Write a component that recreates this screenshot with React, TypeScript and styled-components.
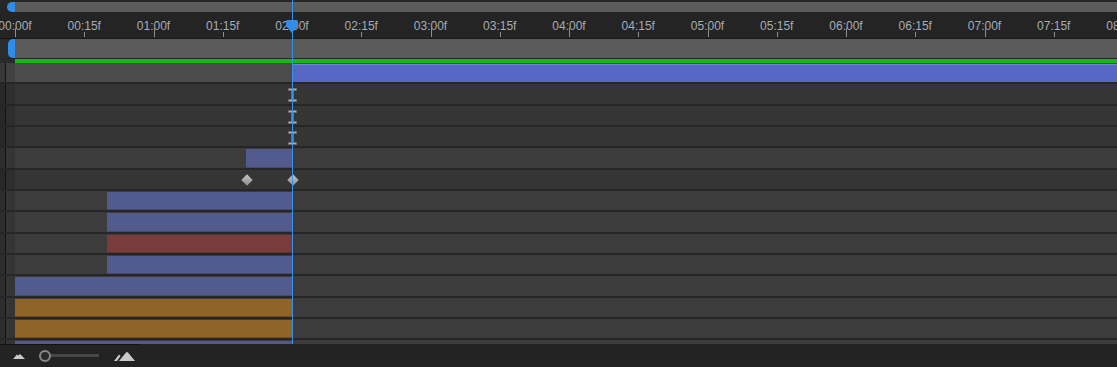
import * as React from 'react';
import styled, { createGlobalStyle, css } from 'styled-components';

const GUTTER = 15;
const FRAME_PX = 69.25 / 15;
const FPS = 30;
const PLAYHEAD = 60;
const ROW_H = 64 / 3;

const frameX = (frame: number) => frame * FRAME_PX;

type BarTone = 'blue' | 'red' | 'orange' | 'work';
type RowTone = 'work' | 'layer' | 'prop';

interface RowData {
  tone: RowTone;
  bar?: { start: number; end?: number; tone: BarTone };
  ibeam?: number;
  keys?: number[];
}

const rows: RowData[] = [
  { tone: 'work', bar: { start: 60, tone: 'work' } },
  { tone: 'prop', ibeam: 60 },
  { tone: 'prop', ibeam: 60 },
  { tone: 'prop', ibeam: 60 },
  { tone: 'layer', bar: { start: 50, end: 60, tone: 'blue' } },
  { tone: 'prop', keys: [50, 60] },
  { tone: 'layer', bar: { start: 20, end: 60, tone: 'blue' } },
  { tone: 'layer', bar: { start: 20, end: 60, tone: 'blue' } },
  { tone: 'layer', bar: { start: 20, end: 60, tone: 'red' } },
  { tone: 'layer', bar: { start: 20, end: 60, tone: 'blue' } },
  { tone: 'layer', bar: { start: 0, end: 60, tone: 'blue' } },
  { tone: 'layer', bar: { start: 0, end: 60, tone: 'orange' } },
  { tone: 'layer', bar: { start: 0, end: 60, tone: 'orange' } },
  { tone: 'layer', bar: { start: 0, end: 60, tone: 'blue' } },
];

const pad = (n: number) => String(n).padStart(2, '0');
const timecode = (frame: number) =>
  `${pad(Math.floor(frame / FPS))}:${pad(frame % FPS)}f`;

const ticks = Array.from({ length: 17 }, (_, i) => i * 15);

const GlobalStyle = createGlobalStyle`
  html, body {
    margin: 0;
    padding: 0;
    background: #232323;
    overflow: hidden;
  }
  body {
    font-family: "Liberation Sans", Arial, sans-serif;
  }
`;

const Panel = styled.div`
  position: relative;
  display: flex;
  flex-direction: column;
  height: 100vh;
  background: #2a2a2a;
  overflow: hidden;
`;

const ScrollStrip = styled.div`
  display: flex;
  height: 12px;
  padding-top: 2px;
  box-sizing: border-box;
  background: #262626;
`;

const Handle = styled.div<{ $offset: number }>`
  flex: none;
  width: ${(p) => GUTTER - p.$offset}px;
  margin-left: ${(p) => p.$offset}px;
  background: #2f8de8;
  border-radius: 5px 0 0 5px;
`;

const ScrollTrack = styled.div`
  flex: 1;
  background: #5b5b5b;
`;

const Ruler = styled.div`
  position: relative;
  height: 26px;
  flex: none;
  background: #242424;
  border-bottom: 1px solid #161616;
  overflow: hidden;
`;

const Label = styled.span`
  position: absolute;
  top: 7px;
  transform: translateX(-50%);
  font-size: 12px;
  line-height: 14px;
  color: #a6acb5;
  white-space: nowrap;
`;

const Tick = styled.span<{ $major: boolean }>`
  position: absolute;
  bottom: 1px;
  width: 1px;
  height: ${(p) => (p.$major ? 9 : 5)}px;
  background: #8e8e8e;
`;

const WorkArea = styled.div`
  display: flex;
  height: 19px;
  flex: none;
  background: #2c2c2c;
  border-bottom: 1px solid #262626;
`;

const WorkTrack = styled.div`
  flex: 1;
  background: #5a5a5a;
`;

const GreenStrip = styled.div`
  display: flex;
  height: 4px;
  flex: none;
  padding-left: ${GUTTER}px;
  background: #2a2a2a;
`;

const GreenBar = styled.div`
  flex: 1;
  background: #1db41d;
`;

const Rows = styled.div`
  flex: 1;
  overflow: hidden;
`;

const rowBg: Record<RowTone, string> = {
  work: '#4b4b4b',
  layer: '#3c3c3c',
  prop: '#353535',
};

const Row = styled.div<{ $tone: RowTone }>`
  display: flex;
  height: ${ROW_H}px;
  box-sizing: border-box;
  border-bottom: 2px solid #262626;
  background: ${(p) => rowBg[p.$tone]};
`;

const Gutter = styled.div`
  flex: none;
  width: ${GUTTER}px;
  background: linear-gradient(
    to right,
    rgba(0, 0, 0, 0.25) 0 5px,
    #121212 5px 6px,
    rgba(0, 0, 0, 0.14) 6px
  );
`;

const Track = styled.div`
  position: relative;
  flex: 1;
`;

const barStyles: Record<BarTone, ReturnType<typeof css>> = {
  blue: css`
    background: #525b8d;
    box-shadow: inset 0 -1px 0 #434a76;
  `,
  red: css`
    background: #7a3b3d;
    box-shadow: inset 0 -1px 0 #633033;
  `,
  orange: css`
    background: #8f6428;
    box-shadow: inset 0 -1px 0 #735020;
  `,
  work: css`
    background: linear-gradient(#7483d8 0 1px, #5667c6 1px);
  `,
};

const Bar = styled.div<{ $tone: BarTone }>`
  position: absolute;
  top: 1px;
  bottom: 0;
  ${(p) => barStyles[p.$tone]}
`;

const IBeam = styled.svg`
  position: absolute;
  top: 4px;
  width: 9px;
  height: 14px;
`;

const Diamond = styled.span`
  position: absolute;
  top: calc(50% - 3px);
  width: 8px;
  height: 8px;
  transform: rotate(45deg);
  background: linear-gradient(135deg, #c4c4c4, #8e8e8e);
`;

const Playhead = styled.div`
  position: absolute;
  left: ${GUTTER + frameX(PLAYHEAD)}px;
  top: 0;
  bottom: 23px;
  width: 1px;
  background: #3a8fe6;
  pointer-events: none;
`;

const PlayheadHead = styled.svg`
  position: absolute;
  top: 20px;
  left: -6px;
  width: 12px;
  height: 13px;
`;

const Toolbar = styled.div`
  position: relative;
  display: flex;
  align-items: center;
  flex: none;
  height: 23px;
  padding-left: 13px;
  background: #232323;
  &::before {
    content: '';
    position: absolute;
    top: 0;
    left: 0;
    width: 140px;
    height: 1px;
    background: #121212;
  }
`;

const ZoomIcon = styled.svg<{ $gap: number }>`
  flex: none;
  margin-right: ${(p) => p.$gap}px;
`;

const Knob = styled.span`
  flex: none;
  width: 12px;
  height: 12px;
  box-sizing: border-box;
  border: 2px solid #8a8a8a;
  border-radius: 50%;
  background: #2b2b2b;
`;

const SliderTrack = styled.span`
  flex: none;
  width: 48px;
  height: 3px;
  margin-right: 15px;
  background: #474747;
`;

const TimelineRow = ({ row }: { row: RowData }) => {
  const { bar, ibeam, keys } = row;
  return (
    <Row $tone={row.tone}>
      <Gutter />
      <Track>
        {bar && (
          <Bar
            $tone={bar.tone}
            style={{
              left: frameX(bar.start),
              ...(bar.end === undefined
                ? { right: 0 }
                : { width: frameX(bar.end) - frameX(bar.start) }),
            }}
          />
        )}
        {ibeam !== undefined && (
          <IBeam viewBox="0 0 9 14" style={{ left: frameX(ibeam) - 4 }}>
            <path
              d="M0.5 0.5 H8.5 V2.5 H5.5 V11.5 H8.5 V13.5 H0.5 V11.5 H3.5 V2.5 H0.5 Z"
              fill="#b0b0b0"
              stroke="#6e6e6e"
              strokeWidth="0.8"
            />
          </IBeam>
        )}
        {keys?.map((k, idx) => (
          <Diamond key={`key-${idx}`} style={{ left: frameX(k) - 3 }} />
        ))}
      </Track>
    </Row>
  );
};

export default function App() {
  return (
    <>
      <GlobalStyle />
      <Panel>
        <ScrollStrip>
          <Handle $offset={7} />
          <ScrollTrack />
        </ScrollStrip>

        <Ruler>
          {ticks.map((f) => (
            <React.Fragment key={`tick-${f}`}>
              <Label style={{ left: GUTTER + frameX(f) }}>{timecode(f)}</Label>
              <Tick $major={f % FPS === 0} style={{ left: GUTTER + frameX(f) }} />
            </React.Fragment>
          ))}
        </Ruler>

        <WorkArea>
          <Handle $offset={8} />
          <WorkTrack />
        </WorkArea>

        <GreenStrip>
          <GreenBar />
        </GreenStrip>

        <Rows>
          {rows.map((row, idx) => (
            <TimelineRow row={row} key={`row-${idx}`} />
          ))}
        </Rows>

        <Toolbar>
          <ZoomIcon $gap={14} width="12" height="6" viewBox="0 0 12 6">
            <path d="M0 6 L4 1.5 L5.5 2.5 L7 1 L12 6 Z" fill="#c9c9c9" />
          </ZoomIcon>
          <Knob />
          <SliderTrack />
          <ZoomIcon $gap={0} width="21" height="10" viewBox="0 0 21 10">
            <path d="M0 10 L5 3.5 L6.5 5 L3 10 Z" fill="#c9c9c9" />
            <path d="M5 10 L12.5 1 L14 1.5 L21 10 Z" fill="#c9c9c9" />
          </ZoomIcon>
        </Toolbar>

        <Playhead>
          <PlayheadHead viewBox="0 0 12 13">
            <path d="M1.5 0 H10.5 Q12 0 12 1.5 V6 L6 13 L0 6 V1.5 Q0 0 1.5 0 Z" fill="#2f8de8" />
          </PlayheadHead>
        </Playhead>
      </Panel>
    </>
  );
}
